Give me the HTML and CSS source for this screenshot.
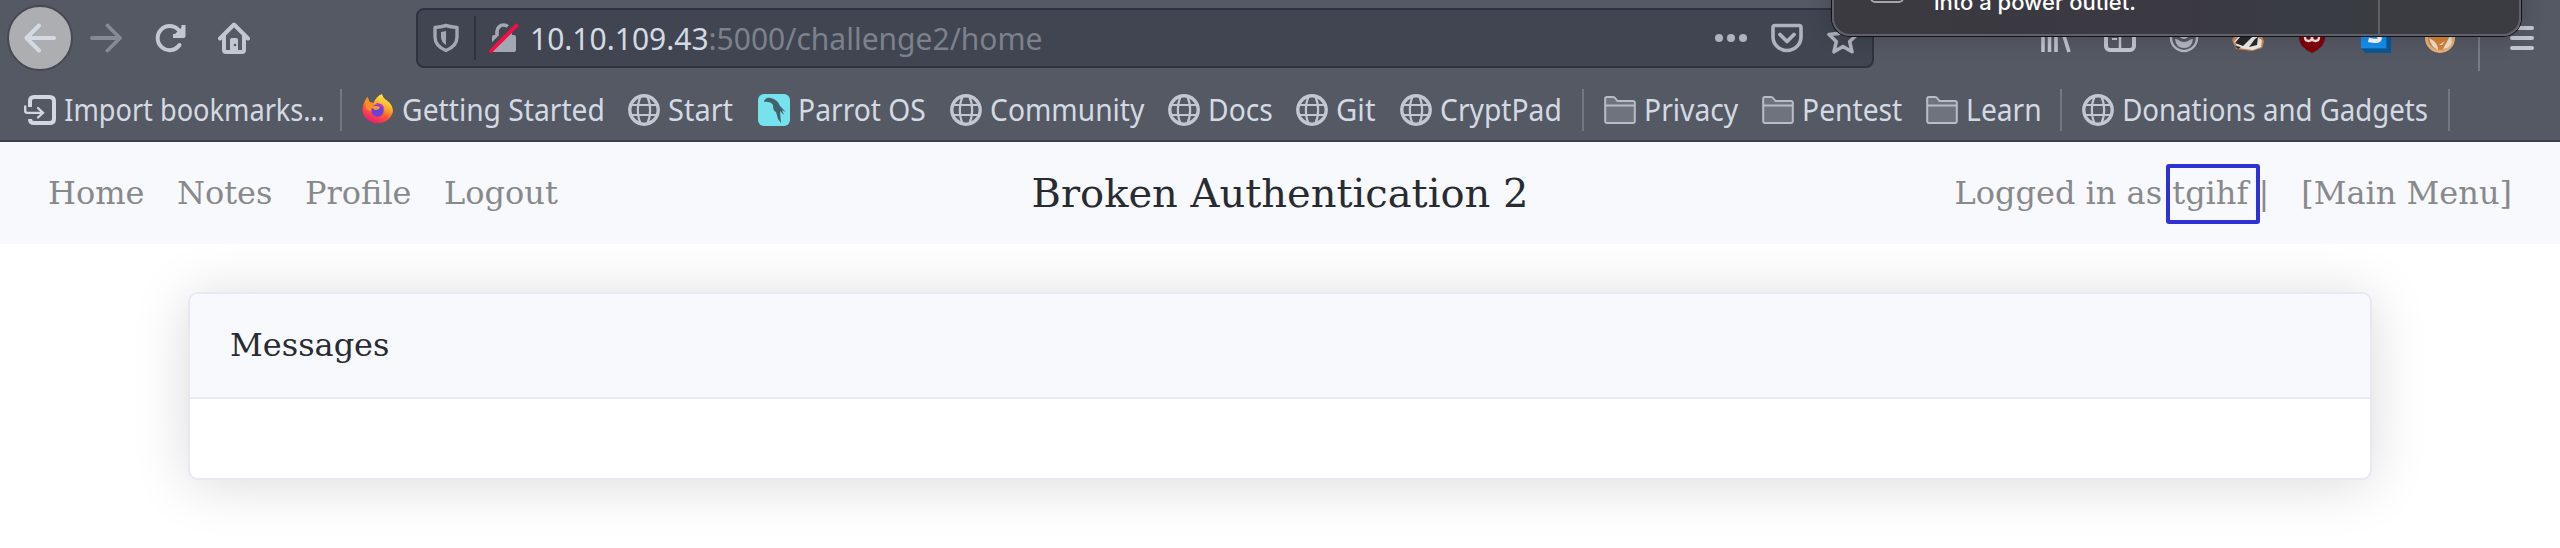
FILE: index.html
```html
<!DOCTYPE html>
<html lang="en">
<head>
<meta charset="utf-8">
<title>Broken Authentication 2</title>
<link rel="stylesheet" href="styles.css">
</head>
<body>
<svg class="defs" width="0" height="0">
  <symbol id="globe" viewBox="0 0 32 32"><g fill="none" stroke="#c3c7d1"><circle cx="16" cy="16" r="14.2" stroke-width="3.4"/><path d="M3 11h26M3 21h26" stroke-width="2"/><path d="M12.5 3C9 10 9 22 12.5 29M19.500 3C23 10 23 22 19.500 29" stroke-width="2.200"/></g></symbol>
  <symbol id="folder" viewBox="0 0 32 32"><path d="M1.200 27V4.500Q1.200 3 2.800 3H9q1.500 0 2.500 1.500L13.500 7H29q1.800 0 1.800 1.800V27q0 2-2 2H3q-1.800 0-1.800-2z" fill="#6f737d" stroke="#b9bcc5" stroke-width="2"/><path d="M2 11.500h28" stroke="#b9bcc5" stroke-width="2"/></symbol>
</svg>

<div class="browser">
  <div class="toolbar">
    <div class="back"><svg width="32" height="30" viewBox="0 0 32 30"><path d="M30 15H3M15 2.500L2.500 15 15 27.500" fill="none" stroke="#d3dae3" stroke-width="4" stroke-linecap="round" stroke-linejoin="round"/></svg></div>
    <svg class="forward" width="32" height="30" viewBox="0 0 32 30"><path d="M2 15h27M17.500 2.500L30 15 17.500 27.500" fill="none" stroke="#868a94" stroke-width="3.800" stroke-linecap="round" stroke-linejoin="round"/></svg>
    <svg class="reload" width="32" height="32" viewBox="0 0 32 32"><path d="M23.500 8A12 12 0 1 0 24.500 23" fill="none" stroke="#c3c7d1" stroke-width="4" stroke-linecap="round"/><path d="M28.500 3v11H18" fill="none" stroke="#c3c7d1" stroke-width="4" stroke-linejoin="round"/><path d="M28 4v10H18z" fill="#c3c7d1"/></svg>
    <svg class="home" width="32" height="32" viewBox="0 0 32 32"><path d="M2 16.500L16 2.500l14 14M6 14v14q0 2 2 2h16q2 0 2-2V14" fill="none" stroke="#c3c7d1" stroke-width="4" stroke-linecap="round" stroke-linejoin="round"/><path d="M12 29V18q0-2 2-2h4q2 0 2 2v11z" fill="#c3c7d1"/><circle cx="17" cy="23" r="1.300" fill="#555964"/></svg>
    <div class="urlbar">
      <svg class="shield" width="26" height="30" viewBox="0 0 26 30"><path d="M13 2.500Q18 4 24 4.500V14q0 9-11 13.500Q2 23 2 14V4.500Q8 4 13 2.500z" fill="none" stroke="#a3a7b2" stroke-width="3.400" stroke-linejoin="round"/><path d="M13 8v14q-5-3-5-8V9z" fill="#a3a7b2"/></svg>
      <span class="url-divider"></span>
      <svg class="lock" width="30" height="30" viewBox="0 0 30 30"><path d="M8 13V8.500a6.500 6.500 0 0 1 13 0V13" fill="none" stroke="#a3a7b2" stroke-width="3.600"/><rect x="3" y="12" width="24" height="17" rx="2" fill="#a3a7b2"/><path d="M0 25L24 1" stroke="#404551" stroke-width="4"/><path d="M2 28L27.500 2.500" stroke="#f70d44" stroke-width="3.800" stroke-linecap="round"/></svg>
      <span class="url"><b>10.10.109.43</b>:5000/challenge2/home</span>
      <svg class="dots" width="32" height="10" viewBox="0 0 32 10"><g fill="#b0b3bd"><circle cx="4" cy="5" r="4"/><circle cx="16" cy="5" r="4"/><circle cx="28" cy="5" r="4"/></g></svg>
      <svg class="pocket" width="32" height="30" viewBox="0 0 32 30"><path d="M4 2.500h24q2 0 2 2V14a14 13.500 0 0 1-28 0V4.500q0-2 2-2z" fill="none" stroke="#b0b3bd" stroke-width="3.600"/><path d="M9 11.500l7 7 7-7" fill="none" stroke="#b0b3bd" stroke-width="3.800" stroke-linecap="round" stroke-linejoin="round"/></svg>
      <svg class="star" width="32" height="32" viewBox="0 0 32 32"><path d="M16 2l4.200 9.400L30 12.500l-7.300 7 2.300 10.300-9-5.300-9 5.300 2.300-10.300L2 12.500l9.800-1.100z" fill="none" stroke="#b0b3bd" stroke-width="3.600" stroke-linejoin="round"/></svg>
    </div>
    <div class="extensions">
      <svg width="32" height="32" viewBox="0 0 32 32"><path d="M3 4v26M9.500 4v26M16 4v26M21.500 6l7.500 24" stroke="#bfc3cd" stroke-width="3.600" fill="none"/></svg>
      <svg width="32" height="32" viewBox="0 0 32 32"><rect x="2" y="4" width="28" height="24" rx="4" fill="none" stroke="#c3c7d1" stroke-width="4"/><path d="M16 5v23" stroke="#c3c7d1" stroke-width="2.500"/><path d="M8 17h5" stroke="#c3c7d1" stroke-width="2"/></svg>
      <svg width="32" height="32" viewBox="0 0 32 32"><circle cx="16" cy="16" r="13" fill="none" stroke="#b4b8c2" stroke-width="2.400"/><circle cx="16" cy="12" r="5" fill="#b4b8c2"/><path d="M7 17q3 0 5 2 4 2 8 0 2-2 5-2-1 9-9 9T7 17z" fill="#b4b8c2"/></svg>
      <svg width="32" height="32" viewBox="0 0 32 32"><path d="M0 18L9 4h18l5 16-2 6-10 3-16-2z" fill="#d18a52"/><path d="M2 20L12 8l18 10-1 7-8 3-14-2z" fill="#f0ece8"/><path d="M3 21L14 8l10 3-13 13zM17 25l6-8 3-2-1 8zM3 24l6 1-3 2z" fill="#29282b"/></svg>
      <svg width="32" height="32" viewBox="0 0 32 32"><path d="M16 1l13 4v11q0 9-13 15Q3 25 3 16V5z" fill="#81040c"/><path d="M9 10v5q0 4 3.500 4t3.500-4q0 4 3.500 4t3.500-4v-5" fill="none" stroke="#f5e8e8" stroke-width="2.400"/></svg>
      <svg width="32" height="32" viewBox="0 0 34 34"><path d="M1 28l5 5h27V12l-5-4z" fill="#0b5795"/><path d="M1 2h27v26H1z" fill="#1690ed"/><path d="M21 6q-12-3-12 3 0 3 6 4 6 1 6 4 0 5-12 2" fill="none" stroke="#fff" stroke-width="4.500"/></svg>
      <svg width="32" height="32" viewBox="0 0 32 32"><circle cx="16" cy="16" r="13.500" fill="#d78539" stroke="#e6b27c" stroke-width="3"/><path d="M5 16q2 9 9 12 0-5-4-9M19 27l8-15 1 8q-2 6-9 7zM15 23l6-4-3 4z" fill="#efe4d6"/></svg>
      <span class="ext-divider"></span>
      <svg class="menu" width="24" height="24" viewBox="0 0 24 24"><path d="M2 2h20M2 12h20M2 22h20" stroke="#c3c7d1" stroke-width="4" stroke-linecap="round"/></svg>
    </div>
  </div>

  <div class="bookmarks">
    <span class="bm bm-import"><svg width="32" height="32" viewBox="0 0 32 32"><path d="M6 13V7q0-4 4-4h15.500q4.500 0 4.500 4v18q0 4-4.500 4H10q-4 0-4-4" fill="none" stroke="#d3d7e0" stroke-width="4"/><path d="M1.200 12.500V17q0 1.800 2 1.800H18M14 14l5 4.800-5 4.700" fill="none" stroke="#d3d7e0" stroke-width="2.300" stroke-linecap="round"/></svg><span>Import bookmarks…</span></span>
    <i class="sep"></i>
    <span class="bm bm-getting"><svg width="32" height="32" viewBox="0 0 32 32"><defs><linearGradient id="fx" x1=".8" y1="0" x2=".3" y2="1"><stop offset="0" stop-color="#fff44f"/><stop offset=".35" stop-color="#ffb52c"/><stop offset=".65" stop-color="#ff5634"/><stop offset="1" stop-color="#ea157d"/></linearGradient></defs><path d="M20 0q1 4 5 6.500 6 4.500 6 11A15.500 14.500 0 0 1 .5 17Q.5 9 5.500 3l2 5 4 1q3-7 8.500-9z" fill="url(#fx)"/><path d="M5.500 3Q2 9 4.500 15q3 3 6 2l4-6-7-3z" fill="#ff8b24"/><circle cx="15.500" cy="16.500" r="6.200" fill="#6b42d9"/><path d="M14 9q8 0 8 6-3-3-6-2z" fill="#a738df"/><path d="M9 13q4-2 9 0-1 3-5 3z" fill="#ff9828"/></svg><span>Getting Started</span></span>
    <span class="bm bm-start"><svg width="32" height="32"><use href="#globe"/></svg><span>Start</span></span>
    <span class="bm bm-parrot"><svg width="32" height="32" viewBox="0 0 32 32"><rect width="32" height="32" rx="6" fill="#75e2ee"/><path d="M6 8q1-5 7-4 7 2 9 8l6 6-4-2 2 5-4-4 1 12-3-4-2-7q-3-1-3-7-3-4-9-3z" fill="#42616a"/></svg><span>Parrot OS</span></span>
    <span class="bm bm-community"><svg width="32" height="32"><use href="#globe"/></svg><span>Community</span></span>
    <span class="bm bm-docs"><svg width="32" height="32"><use href="#globe"/></svg><span>Docs</span></span>
    <span class="bm bm-git"><svg width="32" height="32"><use href="#globe"/></svg><span>Git</span></span>
    <span class="bm bm-crypt"><svg width="32" height="32"><use href="#globe"/></svg><span>CryptPad</span></span>
    <i class="sep"></i>
    <span class="bm bm-privacy"><svg width="32" height="32"><use href="#folder"/></svg><span>Privacy</span></span>
    <span class="bm bm-pentest"><svg width="32" height="32"><use href="#folder"/></svg><span>Pentest</span></span>
    <span class="bm bm-learn"><svg width="32" height="32"><use href="#folder"/></svg><span>Learn</span></span>
    <i class="sep"></i>
    <span class="bm bm-donations"><svg width="32" height="32"><use href="#globe"/></svg><span>Donations and Gadgets</span></span>
    <i class="sep"></i>
  </div>

  <div class="notification">
    <span class="note-icon"></span>
    <span class="note-text">into a power outlet.</span>
    <span class="note-divider"></span>
  </div>
</div>

<nav class="navbar">
  <div class="links"><a>Home</a><a>Notes</a><a>Profile</a><a>Logout</a></div>
  <h1>Broken Authentication 2</h1>
  <div class="account"><span>Logged in as <span class="user">tgihf<i class="marker"></i></span> |</span><a>[Main Menu]</a></div>
</nav>

<main class="card">
  <div class="card-header">Messages</div>
  <div class="card-body"></div>
</main>
</body>
</html>
```

FILE: styles.css
```css
* { box-sizing: border-box; }
body { margin: 0; height: 548px; overflow: hidden; background: #fff; font-family: "DejaVu Serif", serif; font-size: 32px; color: #282b30; }
svg { display: block; flex: none; }
.defs { position: absolute; }

/* Browser chrome */
.browser { position: relative; height: 142px; background: #555964; border-bottom: 2px solid #3c3f4b; font-family: "Noto Sans", sans-serif; overflow: hidden; }
.toolbar { display: flex; align-items: center; height: 76px; padding-left: 7px; }
.back { width: 66px; height: 66px; border: 2px solid #464953; border-radius: 50%; background: #adaeb1; display: flex; align-items: center; justify-content: center; flex: none; }
.forward { margin-left: 17px; }
.reload { margin-left: 33px; }
.home { margin-left: 31px; }
.urlbar { display: flex; align-items: center; flex: none; width: 1458px; height: 60px; margin-left: 166px; padding-left: 15px; border: 2px solid #30333f; border-radius: 8px; background: #404551; }
.url-divider { width: 2px; height: 44px; margin-left: 15px; background: #2e323e; }
.lock { margin-left: 13px; }
.url { margin-left: 11px; width: 1185px; padding-top: 2px; font-size: 30px; line-height: 56px; color: #7c818c; white-space: pre; }
.url b { font-weight: 400; color: #d3dae3; }
.pocket { margin-left: 24px; }
.star { margin-left: 24px; }
.extensions { display: flex; align-items: center; margin-left: 166px; gap: 32px; }
.ext-divider { width: 2px; height: 66px; margin-left: -10px; background: #777b86; }
.menu { margin-left: -2px; }

.bookmarks { display: flex; align-items: center; height: 64px; padding: 4px 0 0 24px; font-size: 30px; line-height: 40px; color: #d3dae3; white-space: nowrap; }
.bm { display: flex; align-items: center; gap: 8px; flex: none; height: 44px; }
/* Labels are set slightly condensed */
.bm > span { transform: scaleX(.94); transform-origin: 2px 50%; }
.sep { flex: none; width: 2px; height: 42px; margin-right: 20px; background: #737782; }
.bm-import { width: 316px; }
.bm-import > span { transform: scaleX(.905); }
.bm-getting { width: 266px; }
.bm-start { width: 130px; }
.bm-start > span { transform: scaleX(.965); }
.bm-parrot { width: 192px; }
.bm-community { width: 218px; }
.bm-docs { width: 128px; }
.bm-git { width: 104px; }
.bm-git > span { transform: scaleX(.975); }
.bm-crypt { width: 182px; }
.bm-privacy { width: 158px; }
.bm-pentest { width: 164px; }
.bm-learn { width: 134px; }
.bm-donations { width: 366px; }
.bm-donations > span { transform: scaleX(.921); }

/* System notification hanging over the top edge */
.notification { position: absolute; top: -60px; left: 1832px; width: 689px; height: 96px; display: flex; align-items: flex-end; border: 2px solid #606168; border-radius: 18px; background: linear-gradient(90deg, #3a3a40, #3b3942 50%, #393c42 65%, #3a3c41); box-shadow: 0 0 0 1px #111217, 0 0 24px rgba(0,0,0,.22); }
.note-icon { width: 34px; height: 34px; margin: 0 0 31px 36px; border: 2px solid #a5a6aa; border-radius: 5px; }
.note-text { width: 444px; margin: 0 0 18px 30px; font: 500 22px/28px Inter, sans-serif; color: #fff; }
.note-divider { width: 2px; height: 92px; background: #606168; }

/* Page */
.navbar { display: grid; grid-template-columns: 1fr auto 1fr; align-items: center; height: 102px; padding: 0 48px; background: #f8f9fd; color: #88898b; }
.links, .account { display: flex; gap: 32px; white-space: pre; }
.links { gap: 32.5px; }
.account { justify-content: flex-end; }
.navbar h1 { margin: 0; font-size: 40px; font-weight: 400; color: #282b30; }
.user { position: relative; }
.marker { position: absolute; left: -6px; top: -10px; width: 94px; height: 60px; border: 4px solid #2f30d5; border-radius: 3px; }
.card { width: 2184px; margin: 48px auto 0; border: 2px solid #e7e8f2; border-radius: 10px; background: #fff; box-shadow: 0 4px 56px rgba(0,0,0,.15); overflow: hidden; }
.card-header { height: 105px; padding: 0 40px; line-height: 102px; background: #f8f9fd; border-bottom: 2px solid #e7eaf3; }
.card-body { height: 79px; }
```
